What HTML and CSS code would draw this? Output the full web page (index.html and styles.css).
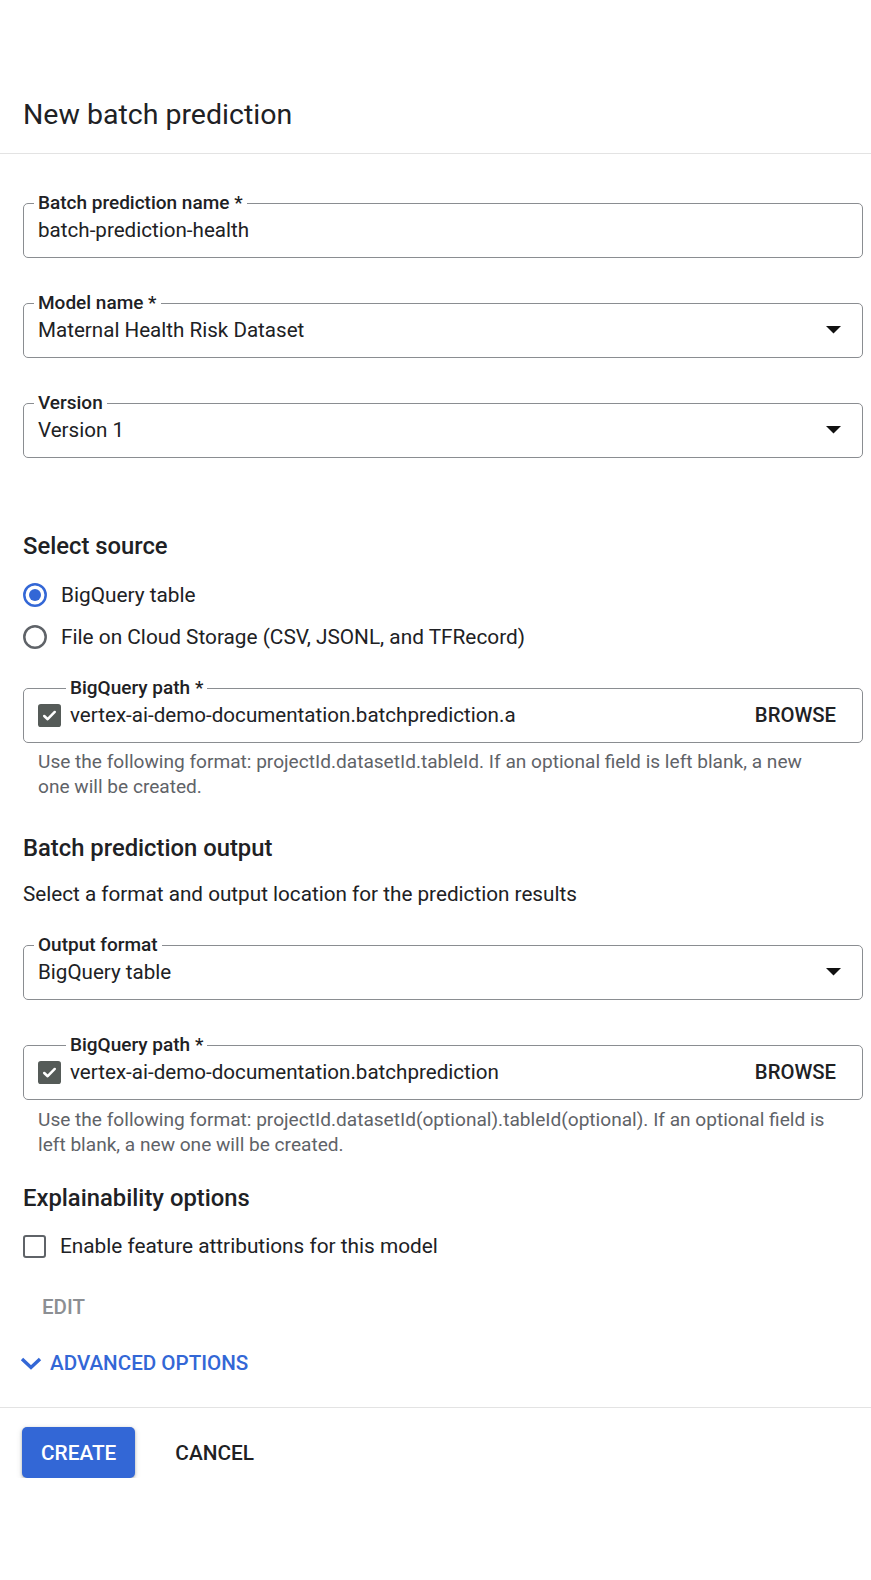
FILE: index.html
```html
<!DOCTYPE html>
<html lang="en">
<head>
<meta charset="utf-8">
<title>New batch prediction</title>
<link rel="stylesheet" href="styles.css">
</head>
<body>
<div class="page">
  <header class="header">
    <h1 class="title">New batch prediction</h1>
  </header>

  <main class="content">
    <fieldset class="field field-first">
      <legend class="label">Batch prediction name *</legend>
      <div class="row"><span class="value">batch-prediction-health</span></div>
    </fieldset>

    <fieldset class="field field-gap">
      <legend class="label">Model name *</legend>
      <div class="row">
        <span class="value">Maternal Health Risk Dataset</span>
        <svg class="arrow" width="15" height="8" viewBox="0 0 15 8"><polygon points="0,0 15,0 7.5,7.5" fill="#111111"/></svg>
      </div>
    </fieldset>

    <fieldset class="field field-gap">
      <legend class="label">Version</legend>
      <div class="row">
        <span class="value">Version 1</span>
        <svg class="arrow" width="15" height="8" viewBox="0 0 15 8"><polygon points="0,0 15,0 7.5,7.5" fill="#111111"/></svg>
      </div>
    </fieldset>

    <h2 class="heading heading-source">Select source</h2>
    <div class="radio-row radio-first">
      <svg class="radio" width="26" height="26" viewBox="0 0 26 26"><circle cx="13" cy="13" r="10.7" fill="none" stroke="#3367d6" stroke-width="2.5"/><circle cx="13" cy="13" r="6" fill="#3367d6"/></svg>
      <span class="option">BigQuery table</span>
    </div>
    <div class="radio-row">
      <svg class="radio" width="26" height="26" viewBox="0 0 26 26"><circle cx="13" cy="13" r="10.7" fill="none" stroke="#5f6368" stroke-width="2.5"/></svg>
      <span class="option">File on Cloud Storage (CSV, JSONL, and TFRecord)</span>
    </div>

    <fieldset class="field field-path">
      <legend class="label label-path">BigQuery path *</legend>
      <div class="row">
        <svg class="check" width="23" height="23" viewBox="0 0 24 24"><rect x="0" y="0" width="24" height="24" rx="3" fill="#555b58"/><path d="M6.5 12.5l3.6 3.4 7.4-7.6" fill="none" stroke="#fff" stroke-width="2.6" stroke-linecap="round" stroke-linejoin="round"/></svg>
        <span class="value value-path">vertex-ai-demo-documentation.batchprediction.a</span>
        <span class="browse">BROWSE</span>
      </div>
    </fieldset>
    <p class="helper">Use the following format: projectId.datasetId.tableId. If an optional field is left blank, a new one will be created.</p>

    <h2 class="heading heading-output">Batch prediction output</h2>
    <p class="desc">Select a format and output location for the prediction results</p>

    <fieldset class="field field-format">
      <legend class="label">Output format</legend>
      <div class="row">
        <span class="value">BigQuery table</span>
        <svg class="arrow" width="15" height="8" viewBox="0 0 15 8"><polygon points="0,0 15,0 7.5,7.5" fill="#111111"/></svg>
      </div>
    </fieldset>

    <fieldset class="field field-gap">
      <legend class="label label-path">BigQuery path *</legend>
      <div class="row">
        <svg class="check" width="23" height="23" viewBox="0 0 24 24"><rect x="0" y="0" width="24" height="24" rx="3" fill="#555b58"/><path d="M6.5 12.5l3.6 3.4 7.4-7.6" fill="none" stroke="#fff" stroke-width="2.6" stroke-linecap="round" stroke-linejoin="round"/></svg>
        <span class="value value-path">vertex-ai-demo-documentation.batchprediction</span>
        <span class="browse">BROWSE</span>
      </div>
    </fieldset>
    <p class="helper helper-2">Use the following format: projectId.datasetId(optional).tableId(optional). If an optional field is left blank, a new one will be created.</p>

    <h2 class="heading heading-explain">Explainability options</h2>
    <div class="check-row">
      <span class="box"></span>
      <span class="option">Enable feature attributions for this model</span>
    </div>

    <div class="edit-row"><span class="edit">EDIT</span></div>

    <div class="advanced">
      <svg class="chevron" width="22" height="13" viewBox="0 0 22 13"><polyline points="2,2 11,10.5 20,2" fill="none" stroke="#3367d6" stroke-width="3.4"/></svg>
      <span class="advanced-text">ADVANCED OPTIONS</span>
    </div>
  </main>

  <footer class="footer">
    <button class="btn btn-primary" type="button">CREATE</button>
    <button class="btn btn-text" type="button">CANCEL</button>
  </footer>
</div>
</body>
</html>
```

FILE: styles.css
```css
html, body {
  margin: 0;
  padding: 0;
  background: #ffffff;
}

body {
  font-family: Roboto, "Liberation Sans", Arial, sans-serif;
  color: #202124;
}

.page {
  width: 871px;
}

.header {
  padding: 97px 23px 20px;
  border-bottom: 1px solid #e3e3e3;
}

.title {
  margin: 0;
  font-size: 28.5px;
  line-height: 36px;
  font-weight: 400;
  color: #202124;
}

.content {
  padding: 0 8px 22px 23px;
  display: flex;
  flex-direction: column;
}

.field {
  margin: 0;
  padding: 2px 26px 13px 14px;
  min-width: 0;
  border: 1px solid #8a8d91;
  border-radius: 5px;
}

.field-first { margin-top: 38px; }
.field-gap { margin-top: 34px; }
.field-path { margin-top: 19px; }
.field-format { margin-top: 28px; }

.label {
  margin-left: -4px;
  padding: 0 4px;
  font-size: 19px;
  line-height: 22px;
  font-weight: 500;
  color: #202124;
}

.label-path {
  margin-left: 28px;
}

.row {
  display: flex;
  align-items: center;
  height: 28px;
}

.value {
  font-size: 20.6px;
  line-height: 28px;
  color: #202124;
  flex: 1;
  white-space: nowrap;
}

.value-path {
  margin-left: 9px;
}

.arrow {
  flex: none;
  margin-right: -5px;
}

.check {
  flex: none;
}

.browse {
  font-size: 20.3px;
  font-weight: 500;
  color: #202124;
}

.heading {
  margin: 0;
  font-size: 23.8px;
  line-height: 30px;
  font-weight: 500;
  color: #202124;
}

.heading-source { margin-top: 73px; }
.heading-output { margin-top: 34px; }
.heading-explain { margin-top: 26px; }

.radio-row {
  display: flex;
  align-items: center;
  height: 42px;
  gap: 13px;
}

.radio-first { margin-top: 13px; }

.radio {
  flex: none;
  margin-left: -1px;
}

.option {
  font-size: 20.8px;
  line-height: 24px;
  color: #202124;
}

.helper {
  margin: 6px 0 0;
  padding: 0 31px 0 15px;
  font-size: 19.1px;
  line-height: 25px;
  color: #5f6368;
}

.helper-2 {
  margin-top: 7px;
}

.desc {
  margin: 19px 0 0;
  font-size: 20.7px;
  line-height: 24px;
  color: #202124;
}

.check-row {
  display: flex;
  align-items: center;
  height: 44px;
  gap: 14px;
  margin-top: 11px;
}

.box {
  flex: none;
  width: 19px;
  height: 19px;
  border: 2.5px solid #5f6368;
  border-radius: 3px;
}

.edit-row {
  display: flex;
  align-items: center;
  height: 44px;
  margin-top: 17px;
  padding-left: 19px;
}

.edit {
  font-size: 20.5px;
  font-weight: 500;
  color: #8c8f93;
}

.advanced {
  display: flex;
  align-items: center;
  height: 44px;
  margin-top: 12px;
  margin-left: -3px;
  gap: 8px;
}

.chevron {
  flex: none;
}

.advanced-text {
  font-size: 20.6px;
  font-weight: 500;
  color: #3367d6;
}

.footer {
  border-top: 1px solid #e3e3e3;
  padding: 19px 23px 0 22px;
  display: flex;
  align-items: center;
  gap: 21px;
}

.btn {
  font-family: Roboto, "Liberation Sans", Arial, sans-serif;
  font-size: 20.8px;
  font-weight: 500;
  height: 51px;
  padding: 0 19px;
  border: none;
  border-radius: 5px;
  cursor: pointer;
}

.btn-primary {
  background: #3367d6;
  color: #ffffff;
  box-shadow: 0 1px 3px rgba(60, 64, 67, 0.35), 0 2px 6px rgba(60, 64, 67, 0.15);
}

.btn-text {
  background: transparent;
  color: #202124;
}
```
